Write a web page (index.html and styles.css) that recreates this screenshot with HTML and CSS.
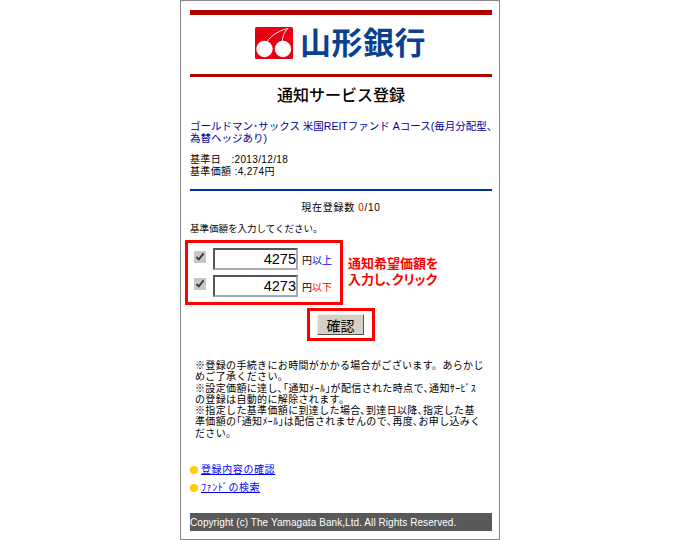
FILE: index.html
```html
<!DOCTYPE html>
<html lang="ja">
<head>
<meta charset="utf-8">
<title>通知サービス登録</title>
<link rel="stylesheet" href="styles.css">
</head>
<body>
<main class="phone">
  <div class="bar-red top"></div>
  <div class="logo">
    <svg class="mark" width="38" height="32" viewBox="0 0 38 32"><rect width="38" height="32" rx="1.5" fill="#e60012"/><path d="M10 18C14 10 22 4 33 1.500M27 19C27 12 28 6 33 1.500" fill="none" stroke="#fff" stroke-width="0.900"/><circle cx="9.500" cy="22" r="8.200" fill="#fff"/><circle cx="28" cy="22" r="8.200" fill="#fff"/></svg>
    <span class="logo-text">山形銀行</span>
  </div>
  <div class="bar-red mid"></div>
  <h1 class="title">通知サービス登録</h1>
  <p class="fund">ゴールドマン･サックス 米国REITファンド Aコース(毎月分配型、<br>為替ヘッジあり)</p>
  <p class="meta">基準日　:2013/12/18<br>基準価額 :4,274円</p>
  <div class="bar-blue"></div>
  <p class="count">現在登録数 <span class="red">0</span>/10</p>
  <p class="prompt">基準価額を入力してください。</p>
  <div class="form-row">
    <div class="box">
      <div class="entry">
        <input class="check" type="checkbox" checked>
        <input class="price" type="text" value="4275">
        <span class="unit">円<span class="blue">以上</span></span>
      </div>
      <div class="entry">
        <input class="check" type="checkbox" checked>
        <input class="price" type="text" value="4273">
        <span class="unit">円<span class="red">以下</span></span>
      </div>
    </div>
    <div class="annotation"><p class="note-line">通知希望価額を</p><p class="note-line">入力し、クリック</p></div>
  </div>
  <div class="confirm-wrap"><div class="confirm-box"><button class="confirm" type="button">確認</button></div></div>
  <p class="notes">※登録の手続きにお時間がかかる場合がございます。あらかじ<br>めご了承ください。<br>※設定価額に達し､｢通知ﾒｰﾙ｣が配信された時点で､通知ｻｰﾋﾞｽ<br>の登録は自動的に解除されます。<br>※指定した基準価額に到達した場合､到達日以降､指定した基<br>準価額の｢通知ﾒｰﾙ｣は配信されませんので､再度､お申し込みく<br>ださい。</p>
  <ul class="links">
    <li><a href="#">登録内容の確認</a></li>
    <li><a href="#">ﾌｧﾝﾄﾞの検索</a></li>
  </ul>
  <footer class="footer">Copyright (c) The Yamagata Bank,Ltd. All Rights Reserved.</footer>
</main>
</body>
</html>
```
FILE: styles.css
```css
* { box-sizing: border-box; }
html, body { margin: 0; padding: 0; background: #fff; }
body { width: 680px; height: 540px; overflow: hidden; font-family: "Liberation Sans", "Noto Sans CJK JP", sans-serif; color: #000; }
.phone { width: 320px; height: 540px; margin-left: 180px; border: 1px solid #888; padding: 9px 7px 0 9px; font-size: 10px; line-height: 11.500px; }
p { margin: 0; }
.bar-red { background: #b00000; }
.bar-red.top { height: 5px; }
.bar-red.mid { height: 3px; }
.logo { height: 59px; display: flex; align-items: flex-start; padding: 12px 0 0 65px; gap: 7px; }
.mark { display: block; flex: none; }
.logo-text { color: #0b3f8f; font-family: "Noto Sans CJK JP", sans-serif; font-size: 31px; line-height: 32px; font-weight: 700; letter-spacing: .5px; white-space: nowrap; margin-top: -2px; }
.title { margin: 4px 0 0; height: 27px; font-family: "Noto Sans CJK JP", sans-serif; font-size: 16px; line-height: 27px; font-weight: 500; text-align: center; }
.fund { margin-top: 13px; color: #000099; font-size: 10.500px; white-space: nowrap; }
.meta { margin-top: 10px; font-size: 10px; letter-spacing: .35px; }
.bar-blue { height: 2px; margin-top: 12px; background: #003399; }
.count { margin-top: 11px; text-align: center; font-size: 10px; letter-spacing: .7px; }
.prompt { margin-top: 9px; font-size: 9.500px; }
.red { color: #f00; }
.blue { color: #00f; }
.form-row { display: flex; margin-top: 6px; margin-left: -5px; align-items: flex-start; gap: 5px; }
.box { width: 158px; height: 65px; border: 3px solid #f00; padding: 5px 0 0 6px; display: flex; flex-direction: column; gap: 5px; flex: none; }
.entry { display: flex; align-items: center; height: 22px; }
.check { width: 12px; height: 12px; margin: 0 7px 4px 0; accent-color: #c8c8c8; }
.price { width: 85px; height: 22px; padding: 0; border: 2px inset #aaa; background: #fff; text-align: right; font-family: "Liberation Sans", sans-serif; font-size: 14.500px; color: #000; border-radius: 0; }
.unit { margin: 3px 0 0 4px; font-size: 10px; white-space: nowrap; }
.annotation { color: #f00; font-family: "Liberation Sans", "Noto Sans CJK JP", sans-serif; font-size: 13px; font-weight: 700; font-feature-settings: "palt"; margin-top: 16px; white-space: nowrap; }
.note-line { height: 16px; line-height: 16px; }
.confirm-wrap { display: flex; margin-top: 3px; padding-left: 117px; }
.confirm-box { width: 68px; height: 33px; border: 3px solid #f00; padding: 3px 0 0 7px; }
.confirm { display: block; width: 47px; height: 21px; padding: 0; background: #d4d0c8; border: 1px solid; border-color: #eee #555 #555 #eee; font-family: "Noto Sans CJK JP", sans-serif; font-size: 14px; line-height: 18px; color: #000; }
.notes { margin: 19px 0 0 5px; font-size: 10px; line-height: 11.300px; letter-spacing: .35px; white-space: nowrap; }
.links { list-style: none; margin: 22px 0 0; padding: 0; font-size: 10px; line-height: 14px; letter-spacing: .6px; }
.links li { display: flex; align-items: center; height: 18px; }
.links li::before { content: ""; width: 8px; height: 8px; margin-right: 3px; border-radius: 50%; background: #ffcc00; flex: none; }
.links a { color: #00f; text-decoration: underline; }
.footer { margin-top: 16px; height: 18px; padding-top: 4px; background: #595959; color: #fff; font-size: 10px; line-height: 12px; white-space: nowrap; letter-spacing: .07px; }
```
